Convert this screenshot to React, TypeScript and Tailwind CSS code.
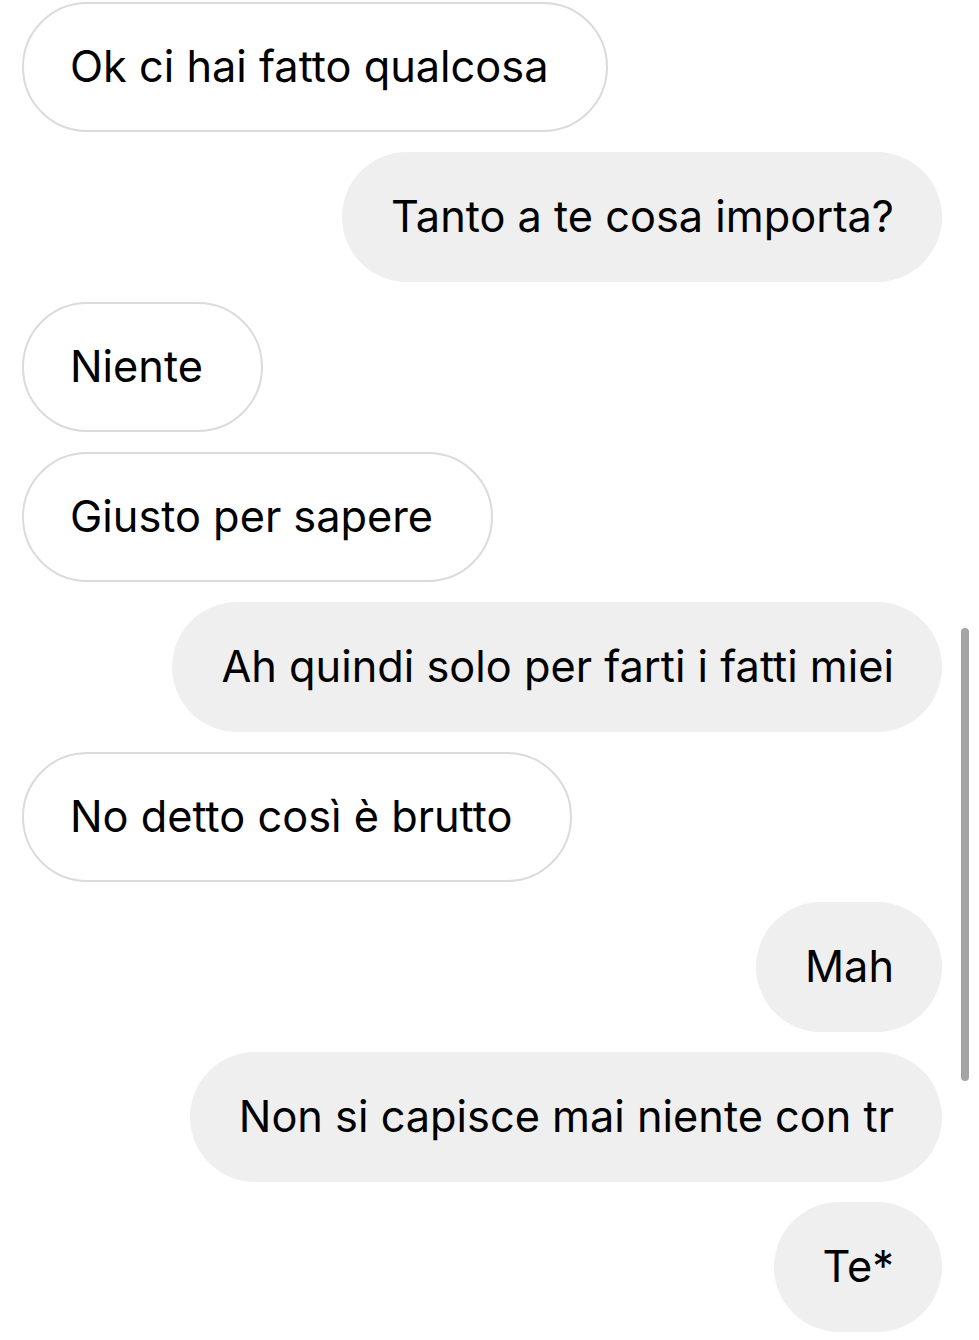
import React from "react";

type Msg = { text: string; mine: boolean };

const messages: Msg[] = [
  { text: "Ok ci hai fatto qualcosa", mine: false },
  { text: "Tanto a te cosa importa?", mine: true },
  { text: "Niente", mine: false },
  { text: "Giusto per sapere", mine: false },
  { text: "Ah quindi solo per farti i fatti miei", mine: true },
  { text: "No detto così è brutto", mine: false },
  { text: "Mah", mine: true },
  { text: "Non si capisce mai niente con tr", mine: true },
  { text: "Te*", mine: true },
];

const Bubble = ({ text, mine }: Msg) => (
  <div className={`flex ${mine ? "justify-end" : "justify-start"}`}>
    <div
      className={`flex h-[130px] items-center whitespace-nowrap rounded-full text-[43.3px] leading-none text-black ${
        mine
          ? "bg-[#efefef] pl-[49px] pr-[48px]"
          : "border-2 border-[#dbdbdb] bg-white pl-[46px] pr-[58px]"
      }`}
    >
      {text}
    </div>
  </div>
);

export default function App() {
  return (
    <div className="relative h-[1340px] w-[979px] overflow-hidden bg-white font-['Inter','Liberation_Sans',sans-serif]">
      <div className="flex flex-col gap-[20px] pl-[22px] pr-[37px] pt-[2px]">
        {messages.map((m, i) => (
          <Bubble key={i} {...m} />
        ))}
      </div>
      {/* scroll indicator */}
      <div className="absolute left-[961px] top-[628px] h-[453px] w-[8px] rounded-full bg-[#a5a5a5]" />
    </div>
  );
}
